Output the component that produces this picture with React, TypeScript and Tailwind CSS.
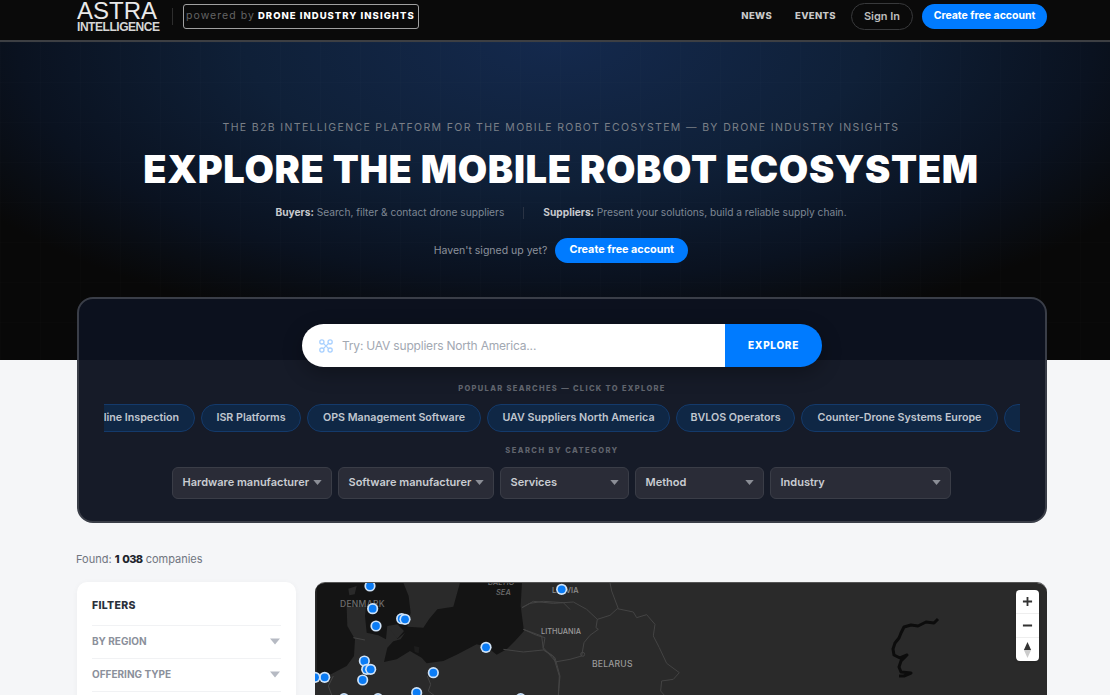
import React from "react";

const FONT = "font-['Inter','Noto_Sans',sans-serif]";

const chips = [
  { t: "Powerline Inspection", w: "w-[164px] justify-end" },
  { t: "ISR Platforms", w: "w-[100px] justify-center" },
  { t: "OPS Management Software", w: "w-[174px] justify-center" },
  { t: "UAV Suppliers North America", w: "w-[183px] justify-center" },
  { t: "BVLOS Operators", w: "w-[119px] justify-center" },
  { t: "Counter-Drone Systems Europe", w: "w-[197px] justify-center" },
  { t: "Delivery Drones", w: "w-[120px] justify-center" },
];

const selects = [
  { t: "Hardware manufacturer", w: "w-[160px]" },
  { t: "Software manufacturer", w: "w-[156px]" },
  { t: "Services", w: "w-[129px]" },
  { t: "Method", w: "w-[129px]" },
  { t: "Industry", w: "w-[181px]" },
];

const markers: [number, number][] = [
  [180, 30], [188, 98], [198, 150], [275, 128], [285, 130], [163, 255], [170, 280], [182, 280],
  [158, 312], [44, 304], [15, 304], [370, 290], [528, 214], [755, 40], [320, 350], [102, 368],
  [204, 368], [632, 368],
];

function Caret({ className }: { className: string }) {
  return (
    <svg viewBox="0 0 10 6" className={className} fill="currentColor">
      <path d="M0 0h10L5 6z" />
    </svg>
  );
}

function DroneIcon() {
  return (
    <svg viewBox="0 0 16 16" className="h-[14px] w-[14px] shrink-0" fill="none" stroke="#a8d0ff" strokeWidth="1.5">
      <circle cx="3.3" cy="3.3" r="2.4" />
      <circle cx="12.7" cy="3.3" r="2.4" />
      <circle cx="3.3" cy="12.7" r="2.4" />
      <circle cx="12.7" cy="12.7" r="2.4" />
      <path d="M5 5l6 6M11 5l-6 6" />
    </svg>
  );
}

function MapArt() {
  return (
    <svg viewBox="315 582 732 113" className="block h-full w-full" preserveAspectRatio="none">
      <rect x="315" y="582" width="732" height="113" fill="#2a2a2a" />
      <g transform="translate(310 575) scale(0.3333)">
        <path
          fill="#141414"
          d="M20 20H280L296 60L302 110L292 152L340 155L358 128L382 100L430 92L450 20H636L632 90L642 165L615 195L590 220L560 236L530 212L500 205L440 236L400 255L350 262L335 245L300 225L260 250L222 258L232 215L250 196L272 190L285 170L262 190L252 160L232 150L228 190L205 178L170 170L165 120L168 90L110 92L112 150L135 190L132 240L110 270L60 296L20 300Z"
        />
        <path fill="#2a2a2a" d="M232 150L262 145L282 165L262 188L248 170Z" />
        <path fill="#2a2a2a" d="M115 38L140 30L134 55L118 58Z" />
        <path fill="#1d1d1d" d="M312 210L328 214L326 232L314 228Z" />
        <g fill="none" stroke="#444444" strokeWidth="3" strokeLinejoin="round">
          <path d="M636 95L660 82L700 76L760 80L780 100" />
          <path d="M640 160L680 178L705 185L700 215L740 260" />
          <path d="M580 220L640 228L700 222L735 245L750 300L745 360" />
          <path d="M130 185L165 192" />
          <path d="M70 300L55 330L66 360" />
          <path d="M352 300L362 325L355 345L375 360" />
        </g>
      </g>
      <g transform="translate(510 575) scale(0.3333)" fill="none" stroke="#444444" strokeWidth="3" strokeLinejoin="round">
        <path d="M36 95L70 76L130 82L190 78L230 100L262 130L300 118L322 98L370 108L380 125L410 116L435 145L430 180L448 215L470 262L508 290L490 310L455 315L452 345L465 360" />
        <path d="M300 20L305 45L325 98" />
        <path d="M262 130L258 155L265 160L240 178L222 200L215 240L180 250L135 258" />
        <path d="M40 160L95 180L100 220L130 240L148 300L145 360" />
        <circle cx="218" cy="235" r="6" />
      </g>
      <g className="font-['Inter',sans-serif]" fontWeight="500">
        <text x="340" y="606" fontSize="8.5" letterSpacing="0.3" fill="#6f6f6f">DENMARK</text>
        <text x="541" y="633" fontSize="7.4" fill="#9a9a9a">LITHUANIA</text>
        <text x="592" y="666" fontSize="8.6" letterSpacing="0.2" fill="#9a9a9a">BELARUS</text>
        <text x="552" y="592" fontSize="7.5" fill="#8f8f8f">LATVIA</text>
        <text x="488" y="584" fontSize="7.5" fontStyle="italic" fill="#6f6f6f">BALTIC</text>
        <text x="496" y="594" fontSize="7.5" fontStyle="italic" fill="#6f6f6f">SEA</text>
      </g>
      <g>
        {markers.map(([x, y], i) => (
          <g key={i} transform={`translate(${310 + x / 3} ${575 + y / 3})`}>
            <circle r="5.6" fill="#cfe3f8" />
            <circle r="3.9" fill="#0b7cf5" />
          </g>
        ))}
      </g>
      <path
        d="M938 618L934 622L926 621L918 625L911 624L904 626L901 632L899 637L895 642L893 648L894 654L900 657L907 654L901 660L899 666L901 671L911 672L904 675L899 675"
        fill="none"
        stroke="#0c0c0c"
        strokeWidth="3"
        strokeLinejoin="round"
      />
    </svg>
  );
}

export default function App() {
  return (
    <div className={`h-[695px] w-[1110px] overflow-hidden bg-[#f5f6f8] ${FONT}`}>
      <header className="flex h-[42px] items-center justify-between border-b-2 border-[#3d3f43] bg-[#0a0a0a] pb-[8px] pl-[77px] pr-[63px]">
        <div className="flex items-center">
          <div className="flex w-[84px] flex-col font-['Liberation_Sans',sans-serif] text-[#e9e9e9]">
            <span className="text-[24px] leading-[21px]">ASTRA</span>
            <span className="text-[12px] font-bold leading-[12px] tracking-[-0.45px] text-[#d6d6d6]">INTELLIGENCE</span>
          </div>
          <div className="ml-[11px] h-[17px] w-px bg-[#2e2e2e]" />
          <div className="ml-[10px] flex h-[25px] w-[236px] items-center whitespace-nowrap rounded-[3px] border border-[#a0a0a0] pl-[2px]">
            <span className="text-[10.5px] tracking-[1.05px] text-[#646464]">powered by</span>
            <span className="ml-[3px] text-[9.5px] font-extrabold tracking-[1.02px] text-white">DRONE INDUSTRY INSIGHTS</span>
          </div>
        </div>
        <nav className="flex items-center">
          <a className="text-[9.5px] font-extrabold tracking-[0.35px] text-[#c9c9c9]">NEWS</a>
          <a className="ml-[23px] text-[9.5px] font-extrabold tracking-[0.35px] text-[#c9c9c9]">EVENTS</a>
          <button className="ml-[15px] h-[27px] w-[62px] rounded-full border border-[#38393b] text-[11px] font-semibold text-[#bdbdbd]">Sign In</button>
          <button className="ml-[9px] h-[25px] w-[125px] rounded-full bg-[#007bff] text-[10.5px] font-bold text-white">Create free account</button>
        </nav>
      </header>

      <section className="flex h-[318px] flex-col items-center bg-[linear-gradient(rgba(255,255,255,0.006)_1px,transparent_1px),linear-gradient(90deg,rgba(255,255,255,0.006)_1px,transparent_1px),radial-gradient(ellipse_62%_95%_at_50%_0%,#14294d_0%,#0f2038_45%,#0a1220_78%,#080808_100%)] bg-[size:40px_40px,40px_40px,100%_100%] pl-[12px] pt-[79px]">
        <p className="text-[10.5px] leading-[14px] tracking-[1.35px] text-[#7b8088]">
          THE B2B INTELLIGENCE PLATFORM FOR THE MOBILE ROBOT ECOSYSTEM — BY DRONE INDUSTRY INSIGHTS
        </p>
        <h1 className="mt-[10px] whitespace-nowrap text-[38px] font-black leading-[48px] tracking-[0.65px] text-white">
          EXPLORE THE MOBILE ROBOT ECOSYSTEM
        </h1>
        <div className="mt-[12px] flex h-[16px] items-center text-[10.2px] text-[#7e8794]">
          <span>
            <strong className="font-bold text-[#c7c9cd]">Buyers:</strong> Search, filter &amp; contact drone suppliers
          </span>
          <span className="mx-[19px] h-[12px] w-px bg-[#2a3344]" />
          <span>
            <strong className="font-bold text-[#c7c9cd]">Suppliers:</strong> Present your solutions, build a reliable supply chain.
          </span>
        </div>
        <div className="mt-[17px] flex items-center gap-[8px]">
          <span className="text-[10.5px] text-[#8c929c]">Haven't signed up yet?</span>
          <button className="h-[25px] w-[133px] rounded-full bg-[#007bff] text-[10.8px] font-bold text-white">Create free account</button>
        </div>
      </section>

      <main className="flex flex-col pl-[77px] pr-[63px]">
        <section className="relative -mt-[63px] flex h-[226px] flex-col items-center rounded-[16px] border-2 border-[#3a3e48] bg-[#0d121f]/[0.96] pt-[25px]">
          <div className="flex h-[43px] w-[520px] overflow-hidden rounded-full shadow-[0_6px_20px_rgba(0,0,0,0.3)]">
            <div className="flex flex-1 items-center gap-[9px] bg-white pl-[17px]">
              <DroneIcon />
              <span className="text-[12px] tracking-[-0.2px] text-[#a2a8b2]">Try: UAV suppliers North America...</span>
            </div>
            <button className="w-[97px] bg-[#007bff] text-[10px] font-extrabold tracking-[0.7px] text-white">EXPLORE</button>
          </div>
          <p className="mt-[17px] text-[7.5px] font-extrabold leading-[9px] tracking-[1.33px] text-[#60646d]">
            POPULAR SEARCHES — CLICK TO EXPLORE
          </p>
          <div className="mt-[11px] w-[916px] overflow-hidden">
            <div className="-ml-[73px] flex gap-[6px]">
              {chips.map((c) => (
                <span
                  key={c.t}
                  className={`flex h-[28px] shrink-0 items-center whitespace-nowrap rounded-full border border-[#143a6b] bg-[#0f2745] px-[15px] text-[10.7px] font-semibold text-[#c0c6cf] ${c.w}`}
                >
                  {c.t}
                </span>
              ))}
            </div>
          </div>
          <p className="mt-[14px] text-[7.5px] font-extrabold leading-[9px] tracking-[1.45px] text-[#60646d]">SEARCH BY CATEGORY</p>
          <div className="mr-[2px] mt-[12px] flex gap-[6px]">
            {selects.map((s) => (
              <div
                key={s.t}
                className={`flex h-[32px] items-center justify-between rounded-[6px] border border-[#3a3d47] bg-[#2a2c37] pb-[2px] pl-[10px] pr-[9px] text-[11px] font-semibold text-[#c9ccd2] ${s.w}`}
              >
                <span className="whitespace-nowrap">{s.t}</span>
                <Caret className="h-[5px] w-[9px] text-[#8b8e96]" />
              </div>
            ))}
          </div>
        </section>

        <p className="-ml-px mt-[28px] h-[16px] text-[11px] leading-[16px] text-[#70757f]">
          Found: <strong className="font-extrabold tracking-[-0.6px] [word-spacing:1.5px] text-[#20242c]">1 038</strong> companies
        </p>

        <div className="mt-[15px] flex gap-[19px]">
          <aside className="h-[300px] w-[219px] shrink-0 rounded-[10px] bg-white px-[15px] shadow-[0_1px_6px_rgba(0,0,0,0.04)]">
            <h2 className="flex h-[43px] items-center pt-[4px] text-[10.5px] font-extrabold tracking-[0.3px] text-[#2a2f3a]">FILTERS</h2>
            {["BY REGION", "OFFERING TYPE", "COUNTRY"].map((f) => (
              <div key={f} className="flex h-[33px] items-center justify-between border-t border-[#f1f2f4] pb-[2px] pr-px text-[10px] font-bold text-[#8b909b]">
                <span>{f}</span>
                <Caret className="h-[7px] w-[10px] text-[#b6bac3]" />
              </div>
            ))}
          </aside>
          <div className="relative h-[300px] w-[732px] overflow-hidden rounded-t-[10px] border-t border-[#555]">
            <div className="h-[113px]">
              <MapArt />
            </div>
            <div className="absolute right-[8px] top-[7px] flex h-[71px] w-[23px] flex-col rounded-[4px] bg-white shadow-sm">
              <span className="flex h-[24px] items-center justify-center border-b border-[#eee]">
                <svg viewBox="0 0 12 12" className="h-[11px] w-[11px]" stroke="#333" strokeWidth="2"><path d="M6 1v10M1 6h10" /></svg>
              </span>
              <span className="flex h-[24px] items-center justify-center border-b border-[#eee]">
                <svg viewBox="0 0 12 12" className="h-[11px] w-[11px]" stroke="#333" strokeWidth="2"><path d="M1 6h10" /></svg>
              </span>
              <span className="flex flex-1 items-center justify-center">
                <svg viewBox="0 0 10 20" className="h-[18px] w-[9px]"><path d="M5 1l4 9H1z" fill="#333" /><path d="M5 19l4-9H1z" fill="#ccc" /></svg>
              </span>
            </div>
          </div>
        </div>
      </main>
    </div>
  );
}
